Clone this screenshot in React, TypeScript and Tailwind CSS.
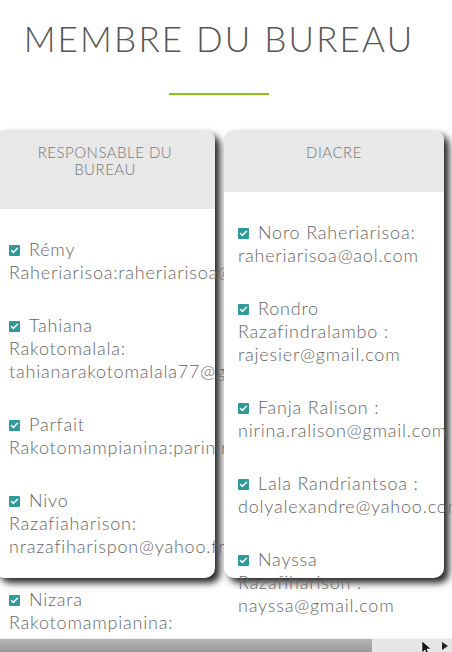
import { Check } from 'lucide-react'

const responsables = [
  'Rémy Raheriarisoa:raheriarisoa@aol.com',
  'Tahiana Rakotomalala: tahianarakotomalala77@gmail.com',
  'Parfait Rakotomampianina:parinirina@gmail.com',
  'Nivo Razafiaharison: nrazafiharispon@yahoo.fr',
  'Nizara Rakotomampianina: nizara@gmail.com',
]

const diacres = [
  'Noro Raheriarisoa: raheriarisoa@aol.com',
  'Rondro Razafindralambo : rajesier@gmail.com',
  'Fanja Ralison : nirina.ralison@gmail.com',
  'Lala Randriantsoa : dolyalexandre@yahoo.com',
  'Nayssa Razafiharison : nayssa@gmail.com',
]

function Tick() {
  return (
    <span className="inline-flex items-center justify-center w-[11px] h-[11px] bg-[#2f9a9a] rounded-[1px] mr-[9px] align-[1px]">
      <Check size={9} strokeWidth={4} className="text-white" />
    </span>
  )
}

function Card({ title, items }: { title: string; items: string[] }) {
  return (
    <div className="relative w-[220px] h-[448px] shrink-0 bg-white rounded-[10px] shadow-[5px_5px_7px_rgba(0,0,0,0.85)]">
      <div className="bg-[#e8e8e8] rounded-t-[10px] pt-[14px] pb-[31px] px-[30px] text-center text-[15px] leading-[17px] font-light tracking-[0.5px] text-[#777] uppercase">
        {title}
      </div>
      <div className="px-[14px] pt-[29px]">
        {items.map((item, i) => (
          <p key={i} className="text-[18px] leading-[23px] text-[#666] font-light tracking-[0.8px] mb-[30px]">
            <Tick />
            {item}
          </p>
        ))}
      </div>
    </div>
  )
}

export default function App() {
  return (
    <div className="relative w-[452px] h-[652px] overflow-hidden flex flex-col bg-white" style={{ fontFamily: 'Lato, "Open Sans", sans-serif' }}>
      <div className="flex-1 overflow-hidden">
        <div className="w-[438px] pt-[17px] text-center">
          <h1 className="text-[35px] leading-[42px] font-light tracking-[2.2px] text-[#555]">MEMBRE DU BUREAU</h1>
          <div className="mx-auto mt-[34px] w-[100px] h-[2px] bg-[#8cc21a]" />
        </div>

        <div className="flex gap-[9px] -ml-[5px] mt-[35px] items-start">
          <Card title="Responsable du bureau" items={responsables} />
          <Card title="Diacre" items={diacres} />
        </div>
      </div>

      {/* horizontal scrollbar */}
      <div className="h-[14px] shrink-0 flex bg-[#e6e6e6] border-t border-[#f2f2f2]">
        <div className="w-[372px] h-full bg-gradient-to-b from-[#b5b5b5] to-[#9a9a9a]" />
        <div className="flex-1" />
        <div className="w-[14px] flex items-center justify-center">
          <svg width="6" height="8" viewBox="0 0 6 8"><path d="M0 0L6 4L0 8Z" fill="#222" /></svg>
        </div>
      </div>

      {/* mouse pointer */}
      <svg className="absolute left-[422px] top-[641px]" width="10" height="14" viewBox="0 0 10 14">
        <path d="M0 0L0 12L3 9L5 14L7 13L5 8L9 8Z" fill="#111" stroke="#fff" strokeWidth="0.6" />
      </svg>
    </div>
  )
}
